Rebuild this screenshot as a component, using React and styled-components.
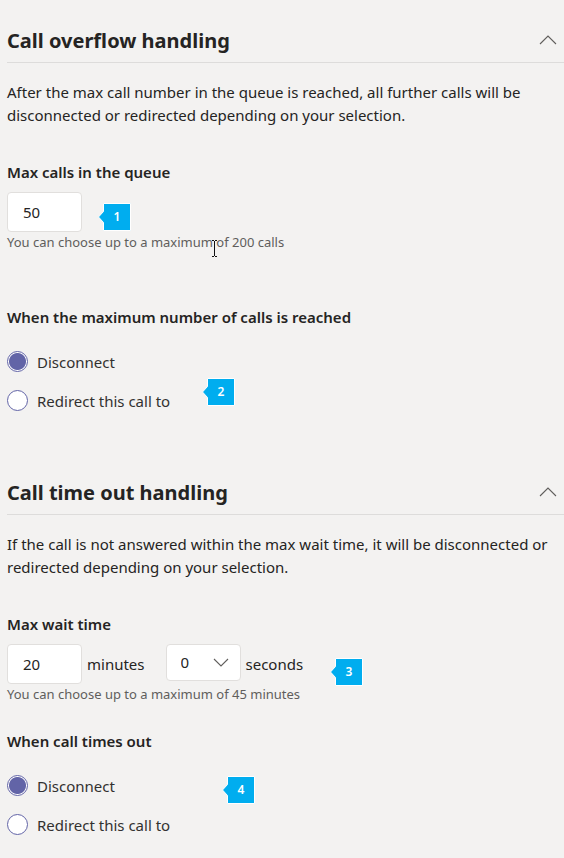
import React, { useState } from "react";
import styled, { createGlobalStyle } from "styled-components";

const GlobalStyle = createGlobalStyle`
  *, *::before, *::after { box-sizing: border-box; }
  body {
    margin: 0;
    background: #f3f2f1;
    color: #252423;
    font: 15px/23px "Segoe UI", "Noto Sans", sans-serif;
  }
  input, select, button { font: inherit; color: inherit; }
`;

const Page = styled.main`
  padding: 20px 0 12px 7px;
`;

const Section = styled.section`
  & + & { margin-top: 51px; }
`;

const SectionHeader = styled.header`
  display: flex;
  align-items: center;
  justify-content: space-between;
  height: 43px;
  border-bottom: 1px solid #dddcdb;
`;

const Title = styled.h2`
  margin: 0;
  font-size: 20px;
  line-height: 28px;
  font-weight: 700;
`;

const CollapseButton = styled.button`
  display: flex;
  padding: 6px 7px 9px;
  border: 0;
  background: none;
  color: #605e5c;
  cursor: pointer;
`;

const Description = styled.p`
  margin: 18px 0 0;
  padding-right: 8px;
`;

const Field = styled.div`
  margin-top: ${(p) => p.$gap}px;
`;

const FieldLabel = styled.label`
  display: block;
  font-weight: 600;
  line-height: 24px;
`;

const Group = styled.fieldset`
  position: relative;
  min-width: 0;
  margin: ${(p) => p.$gap}px 0 0;
  padding: 0;
  border: 0;
`;

const Legend = styled.legend`
  padding: 0;
  margin-bottom: 14px;
  font-weight: 600;
  line-height: 24px;
`;

const InputRow = styled.div`
  position: relative;
  display: flex;
  align-items: center;
  height: 40px;
  margin-top: 8px;
`;

const NumberInput = styled.input`
  width: 75px;
  height: 40px;
  padding: 0 15px;
  border: 1px solid #e1dfdd;
  border-radius: 4px;
  background: #fff;
`;

const Unit = styled.span`
  margin: 0 21px 0 5px;
`;

const SelectBox = styled.div`
  display: grid;
  align-items: center;
  align-self: flex-start;
  width: 75px;

  & > * { grid-area: 1 / 1; }
  & > svg {
    justify-self: end;
    margin-right: 11px;
    color: #605e5c;
    pointer-events: none;
  }
`;

const Select = styled.select`
  width: 100%;
  height: 37px;
  padding: 0 14px;
  border: 1px solid #e1dfdd;
  border-radius: 4px;
  background: #fff;
  appearance: none;
`;

const Hint = styled.p`
  position: relative;
  margin: 0;
  font-size: 13px;
  line-height: 20px;
  color: #605e5c;
`;

const RadioRow = styled.label`
  display: flex;
  align-items: center;
  gap: 9px;
  width: fit-content;
  height: 39px;
  color: #323130;
  cursor: pointer;
`;

const Radio = styled.input`
  appearance: none;
  width: 21px;
  height: 21px;
  margin: 0 0 2px;
  border: 1px solid #6264a7;
  border-radius: 50%;
  background: #fff;

  &:checked {
    background: radial-gradient(circle, #6264a7 8px, #fff 9px);
  }
`;

const Badge = styled.span`
  position: absolute;
  left: ${(p) => p.$left}px;
  top: ${(p) => p.$top}px;
  width: 33px;
  height: 28px;
  padding-left: 5px;
  color: #fff;
  font-size: 12px;
  font-weight: 600;
  line-height: 27px;
  text-align: center;

  & > svg { position: absolute; inset: 0; }
  & > span { position: relative; }
`;

const TextCursor = styled.svg`
  position: absolute;
  left: 204px;
  top: 8px;
`;

function Chevron({ up }) {
  return (
    <svg width="18" height="10" viewBox="0 0 18 10" fill="none" stroke="currentColor" strokeWidth="1.1" aria-hidden="true">
      <path d={up ? "M1 9 9 1l8 8" : "M2 1l7 7 7-7"} />
    </svg>
  );
}

function Callout({ number, left, top }) {
  return (
    <Badge $left={left} $top={top}>
      <svg width="33" height="28" viewBox="0 0 33 28" aria-hidden="true">
        <path d="M5.5.5h27v27h-27v-8L.5 14l5-5.5z" fill="#00adef" stroke="#fff" />
      </svg>
      <span>{number}</span>
    </Badge>
  );
}

function CollapsibleSection({ title, description, children }) {
  const [open, setOpen] = useState(true);
  return (
    <Section>
      <SectionHeader>
        <Title>{title}</Title>
        <CollapseButton type="button" aria-label={title} aria-expanded={open} onClick={() => setOpen(!open)}>
          <Chevron up={open} />
        </CollapseButton>
      </SectionHeader>
      {open && (
        <>
          <Description>{description}</Description>
          {children}
        </>
      )}
    </Section>
  );
}

function ActionChoice({ name, legend, gap, children }) {
  return (
    <Group $gap={gap}>
      <Legend>{legend}</Legend>
      <RadioRow>
        <Radio type="radio" name={name} value="disconnect" defaultChecked />
        Disconnect
      </RadioRow>
      <RadioRow>
        <Radio type="radio" name={name} value="redirect" />
        Redirect this call to
      </RadioRow>
      {children}
    </Group>
  );
}

export default function App() {
  return (
    <>
      <GlobalStyle />
      <Page>
        <CollapsibleSection
          title="Call overflow handling"
          description="After the max call number in the queue is reached, all further calls will be disconnected or redirected depending on your selection."
        >
          <Field $gap={33}>
            <FieldLabel htmlFor="max-calls">Max calls in the queue</FieldLabel>
            <InputRow>
              <NumberInput id="max-calls" type="text" inputMode="numeric" defaultValue="50" />
              <Callout number="1" left={91} top={11} />
            </InputRow>
            <Hint>
              You can choose up to a maximum of 200 calls
              <TextCursor width="8" height="17" viewBox="0 0 8 17" fill="none" stroke="#111" aria-hidden="true">
                <path d="M1 .5h2M4 .5h2M3.5 1v15M1 16.5h2M4 16.5h2" />
              </TextCursor>
            </Hint>
          </Field>
          <ActionChoice name="overflow" legend="When the maximum number of calls is reached" gap={53}>
            <Callout number="2" left={195} top={35} />
          </ActionChoice>
        </CollapsibleSection>

        <CollapsibleSection
          title="Call time out handling"
          description="If the call is not answered within the max wait time, it will be disconnected or redirected depending on your selection."
        >
          <Field $gap={33}>
            <FieldLabel htmlFor="wait-minutes">Max wait time</FieldLabel>
            <InputRow>
              <NumberInput id="wait-minutes" type="text" inputMode="numeric" defaultValue="20" />
              <Unit>minutes</Unit>
              <SelectBox>
                <Select aria-label="Seconds" defaultValue="0">
                  <option>0</option>
                  <option>15</option>
                  <option>30</option>
                  <option>45</option>
                </Select>
                <Chevron />
              </SelectBox>
              <Unit>seconds</Unit>
              <Callout number="3" left={323} top={14} />
            </InputRow>
            <Hint>You can choose up to a maximum of 45 minutes</Hint>
          </Field>
          <ActionChoice name="timeout" legend="When call times out" gap={25}>
            <Callout number="4" left={215} top={9} />
          </ActionChoice>
        </CollapsibleSection>
      </Page>
    </>
  );
}
